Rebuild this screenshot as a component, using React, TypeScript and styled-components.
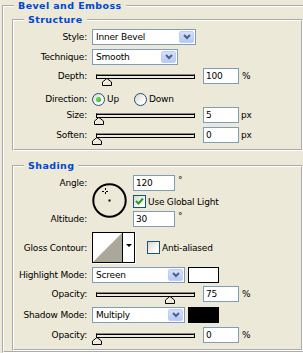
import React from 'react';
import styled, { createGlobalStyle } from 'styled-components';

const GlobalStyle = createGlobalStyle`
  html, body { margin: 0; padding: 0; background: #ece9d8; }
  body {
    overflow: hidden;
    font-family: "DejaVu Sans", "Liberation Sans", sans-serif;
    font-size: 9px;
    letter-spacing: -0.2px;
    color: #000;
  }
  * { box-sizing: border-box; }
`;

const Page = styled.div`
  width: 303px;
  height: 353px;
  overflow: hidden;
  padding-left: 2px;
`;

const Group = styled.fieldset<{ $w: number; $mt?: number; $ml?: number; $pb?: number }>`
  margin: ${(p) => p.$mt ?? 0}px 0 0 ${(p) => p.$ml ?? 0}px;
  padding: 0 0 ${(p) => p.$pb ?? 0}px 0;
  width: ${(p) => p.$w}px;
  min-width: 0;
  border: 2px groove #ffffff;
`;

const Legend = styled.legend`
  margin-left: 10px;
  padding: 0 4px;
  height: 12px;
  line-height: 12px;
  font-family: "DejaVu Sans", "Liberation Sans", sans-serif;
  font-weight: bold;
  font-size: 9.5px;
  letter-spacing: 0.4px;
  color: #0046d5;
`;

const Row = styled.div<{ $mt: number; $h: number }>`
  display: grid;
  grid-template-columns: 73px auto;
  column-gap: 5px;
  align-items: center;
  margin-top: ${(p) => p.$mt}px;
  height: ${(p) => p.$h}px;
`;

const Label = styled.span`
  text-align: right;
  white-space: nowrap;
  line-height: 16px;
`;

const Controls = styled.div`
  display: flex;
  align-items: center;
  height: 100%;
`;

const SelectBox = styled.div<{ $w: number }>`
  width: ${(p) => p.$w}px;
  height: 16px;
  border: 1px solid #7f9db9;
  background: #fff;
  display: flex;
  align-items: center;
  padding: 1px;
`;

const SelectText = styled.span`
  flex: 1;
  padding-left: 2px;
  white-space: nowrap;
  overflow: hidden;
`;

const DropButton = styled.span`
  width: 15px;
  height: 12px;
  border-radius: 2px;
  border: 1px solid #bccdf9;
  background: linear-gradient(#d6e1fd, #b5c9f8);
  display: flex;
  align-items: center;
  justify-content: center;
`;

const Chevron = () => (
  <svg width="8" height="6" viewBox="0 0 8 6">
    <polyline points="1,1 4,4 7,1" fill="none" stroke="#4d6185" strokeWidth="2" />
  </svg>
);

const Select = ({ w, value }: { w: number; value: string }) => (
  <SelectBox $w={w}>
    <SelectText>{value}</SelectText>
    <DropButton>
      <Chevron />
    </DropButton>
  </SelectBox>
);

const SliderBox = styled.div`
  width: 111px;
  height: 16px;
  display: flex;
  align-items: center;
  padding: 0 8px 0 4px;
`;

const Track = styled.div`
  position: relative;
  flex: 1;
  height: 5px;
  background: #ece9d8;
  border: 1px solid #000;
  border-top-color: #8c8a7f;
  box-shadow: inset 0 1px 0 #000;
`;

const Thumb = styled.svg`
  position: absolute;
  top: 3px;
  margin-left: -5px;
`;

const Slider = ({ pct }: { pct: number }) => (
  <SliderBox>
    <Track>
      <Thumb width="10" height="8" viewBox="0 0 10 8" style={{ left: `${pct}%` }}>
        <polygon points="0.5,7.5 0.5,4 5,0.5 9.5,4 9.5,7.5" fill="#ece9d8" stroke="#000" strokeWidth="1" />
        <polyline points="1.5,6.5 1.5,4.4 5,1.7" fill="none" stroke="#fff" strokeWidth="1" />
      </Thumb>
    </Track>
  </SliderBox>
);

const Field = styled.input<{ $w: number }>`
  width: ${(p) => p.$w}px;
  height: 16px;
  margin: 0;
  border: 1px solid #7f9db9;
  background: #fff;
  padding: 0 0 0 2px;
  font: inherit;
  letter-spacing: inherit;
  color: #000;
  outline: none;
`;

const Unit = styled.span<{ $ml: number; $top?: boolean }>`
  margin-left: ${(p) => p.$ml}px;
  align-self: ${(p) => (p.$top ? 'flex-start' : 'center')};
  line-height: ${(p) => (p.$top ? '10px' : '16px')};
`;

const RadioOption = styled.span<{ $w?: number }>`
  display: flex;
  align-items: center;
  gap: 2px;
  width: ${(p) => (p.$w ? `${p.$w}px` : 'auto')};
`;

const RadioCircle = styled.span<{ $on?: boolean }>`
  width: 13px;
  height: 13px;
  border-radius: 50%;
  border: 1px solid #1c5180;
  background: linear-gradient(135deg, #d8d6cc, #ffffff 75%);
  display: flex;
  align-items: center;
  justify-content: center;
  &::after {
    content: '';
    width: 5px;
    height: 5px;
    border-radius: 50%;
    background: radial-gradient(circle at 35% 35%, #6fe06a, #21a121);
    display: ${(p) => (p.$on ? 'block' : 'none')};
  }
`;

const CheckOption = styled.span<{ $ml?: number }>`
  display: flex;
  align-items: center;
  gap: 2px;
  margin-left: ${(p) => p.$ml ?? 0}px;
  white-space: nowrap;
`;

const CheckBox = styled.span`
  width: 13px;
  height: 13px;
  border: 1px solid #1c5180;
  background: linear-gradient(135deg, #d8d6cc, #ffffff 75%);
  display: flex;
  align-items: center;
  justify-content: center;
`;

const Check = ({ on }: { on?: boolean }) => (
  <CheckBox>
    {on && (
      <svg width="9" height="9" viewBox="0 0 9 9">
        <polyline points="1,4 3.5,6.5 8,1.5" fill="none" stroke="#21a121" strokeWidth="2" />
      </svg>
    )}
  </CheckBox>
);

const AngleBlock = styled.div`
  display: grid;
  grid-template-columns: 73px auto;
  column-gap: 5px;
  margin-top: 3px;
  height: 52px;
`;

const LabelStack = styled.div`
  display: flex;
  flex-direction: column;
  justify-content: space-between;
  text-align: right;
`;

const AngleControls = styled.div`
  display: flex;
  align-items: flex-start;
  gap: 6px;
`;

const DialWrap = styled.div`
  margin-top: 8px;
  width: 35px;
  height: 35px;
`;

const AngleFields = styled.div`
  display: flex;
  flex-direction: column;
`;

const FieldLine = styled.div<{ $mt?: number }>`
  display: flex;
  height: 16px;
  margin-top: ${(p) => p.$mt ?? 0}px;
`;

const CheckLine = styled.div`
  display: flex;
  height: 13px;
  margin-top: 4px;
`;

const ContourBox = styled.div`
  display: flex;
  width: 43px;
  height: 31px;
  border: 1px solid #000;
  box-shadow: 1px 1px 0 #fff;
  background: #fff;
`;

const ContourSwatch = styled.div`
  width: 30px;
  height: 100%;
  border-right: 1px solid #000;
`;

const ContourDrop = styled.div`
  flex: 1;
  display: flex;
  align-items: center;
  justify-content: center;
  padding-bottom: 4px;
  &::after {
    content: '';
    border-left: 3px solid transparent;
    border-right: 3px solid transparent;
    border-top: 3px solid #000;
  }
`;

const Swatch = styled.div<{ $c: string }>`
  width: 31px;
  height: 16px;
  margin-left: 3px;
  border: 1px solid #000;
  background: ${(p) => p.$c};
`;

const Dial = () => (
  <svg width="35" height="35" viewBox="0 0 35 35">
    <circle cx="17.5" cy="17.5" r="16.2" fill="none" stroke="#000" strokeWidth="2" />
    <rect x="16.5" y="16.5" width="2" height="2" fill="#000" />
    <g stroke="#000" strokeWidth="1">
      <line x1="10" y1="8.5" x2="12" y2="8.5" />
      <line x1="14" y1="8.5" x2="16" y2="8.5" />
      <line x1="13.5" y1="5" x2="13.5" y2="7" />
      <line x1="13.5" y1="9" x2="13.5" y2="11" />
    </g>
  </svg>
);

export default function App() {
  return (
    <Page>
      <GlobalStyle />
      <Group $w={311}>
        <Legend>Bevel and Emboss</Legend>
        <Group $w={291} $ml={8} $mt={2} $pb={6}>
          <Legend>Structure</Legend>
          <Row $mt={3} $h={16}>
            <Label>Style:</Label>
            <Controls>
              <Select w={104} value="Inner Bevel" />
            </Controls>
          </Row>
          <Row $mt={4} $h={16}>
            <Label>Technique:</Label>
            <Controls>
              <Select w={86} value="Smooth" />
            </Controls>
          </Row>
          <Row $mt={3} $h={16}>
            <Label>Depth:</Label>
            <Controls>
              <Slider pct={10} />
              <Field $w={36} readOnly value="100" />
              <Unit $ml={3}>%</Unit>
            </Controls>
          </Row>
          <Row $mt={7} $h={14}>
            <Label>Direction:</Label>
            <Controls>
              <RadioOption $w={42}>
                <RadioCircle $on />
                Up
              </RadioOption>
              <RadioOption>
                <RadioCircle />
                Down
              </RadioOption>
            </Controls>
          </Row>
          <Row $mt={2} $h={16}>
            <Label>Size:</Label>
            <Controls>
              <Slider pct={2} />
              <Field $w={36} readOnly value="5" />
              <Unit $ml={2}>px</Unit>
            </Controls>
          </Row>
          <Row $mt={4} $h={16}>
            <Label>Soften:</Label>
            <Controls>
              <Slider pct={0} />
              <Field $w={36} readOnly value="0" />
              <Unit $ml={2}>px</Unit>
            </Controls>
          </Row>
        </Group>

        <Group $w={291} $ml={8} $mt={9} $pb={6}>
          <Legend>Shading</Legend>
          <AngleBlock>
            <LabelStack>
              <Label>Angle:</Label>
              <Label>Altitude:</Label>
            </LabelStack>
            <AngleControls>
              <DialWrap>
                <Dial />
              </DialWrap>
              <AngleFields>
                <FieldLine>
                  <Field $w={42} readOnly value="120" />
                  <Unit $ml={3} $top>°</Unit>
                </FieldLine>
                <CheckLine>
                  <CheckOption>
                    <Check on />
                    Use Global Light
                  </CheckOption>
                </CheckLine>
                <FieldLine $mt={3}>
                  <Field $w={42} readOnly value="30" />
                  <Unit $ml={3} $top>°</Unit>
                </FieldLine>
              </AngleFields>
            </AngleControls>
          </AngleBlock>
          <Row $mt={5} $h={31}>
            <Label>Gloss Contour:</Label>
            <Controls>
              <ContourBox>
                <ContourSwatch>
                  <svg width="29" height="29" viewBox="0 0 29 29">
                    <polygon points="0,29 29,0 29,29" fill="#aca899" />
                  </svg>
                </ContourSwatch>
                <ContourDrop />
              </ContourBox>
              <CheckOption $ml={12}>
                <Check />
                Anti-aliased
              </CheckOption>
            </Controls>
          </Row>
          <Row $mt={4} $h={16}>
            <Label>Highlight Mode:</Label>
            <Controls>
              <Select w={93} value="Screen" />
              <Swatch $c="#ffffff" />
            </Controls>
          </Row>
          <Row $mt={3} $h={16}>
            <Label>Opacity:</Label>
            <Controls>
              <Slider pct={75} />
              <Field $w={36} readOnly value="75" />
              <Unit $ml={3}>%</Unit>
            </Controls>
          </Row>
          <Row $mt={5} $h={16}>
            <Label>Shadow Mode:</Label>
            <Controls>
              <Select w={93} value="Multiply" />
              <Swatch $c="#000000" />
            </Controls>
          </Row>
          <Row $mt={4} $h={16}>
            <Label>Opacity:</Label>
            <Controls>
              <Slider pct={0} />
              <Field $w={36} readOnly value="0" />
              <Unit $ml={3}>%</Unit>
            </Controls>
          </Row>
        </Group>
      </Group>
    </Page>
  );
}
